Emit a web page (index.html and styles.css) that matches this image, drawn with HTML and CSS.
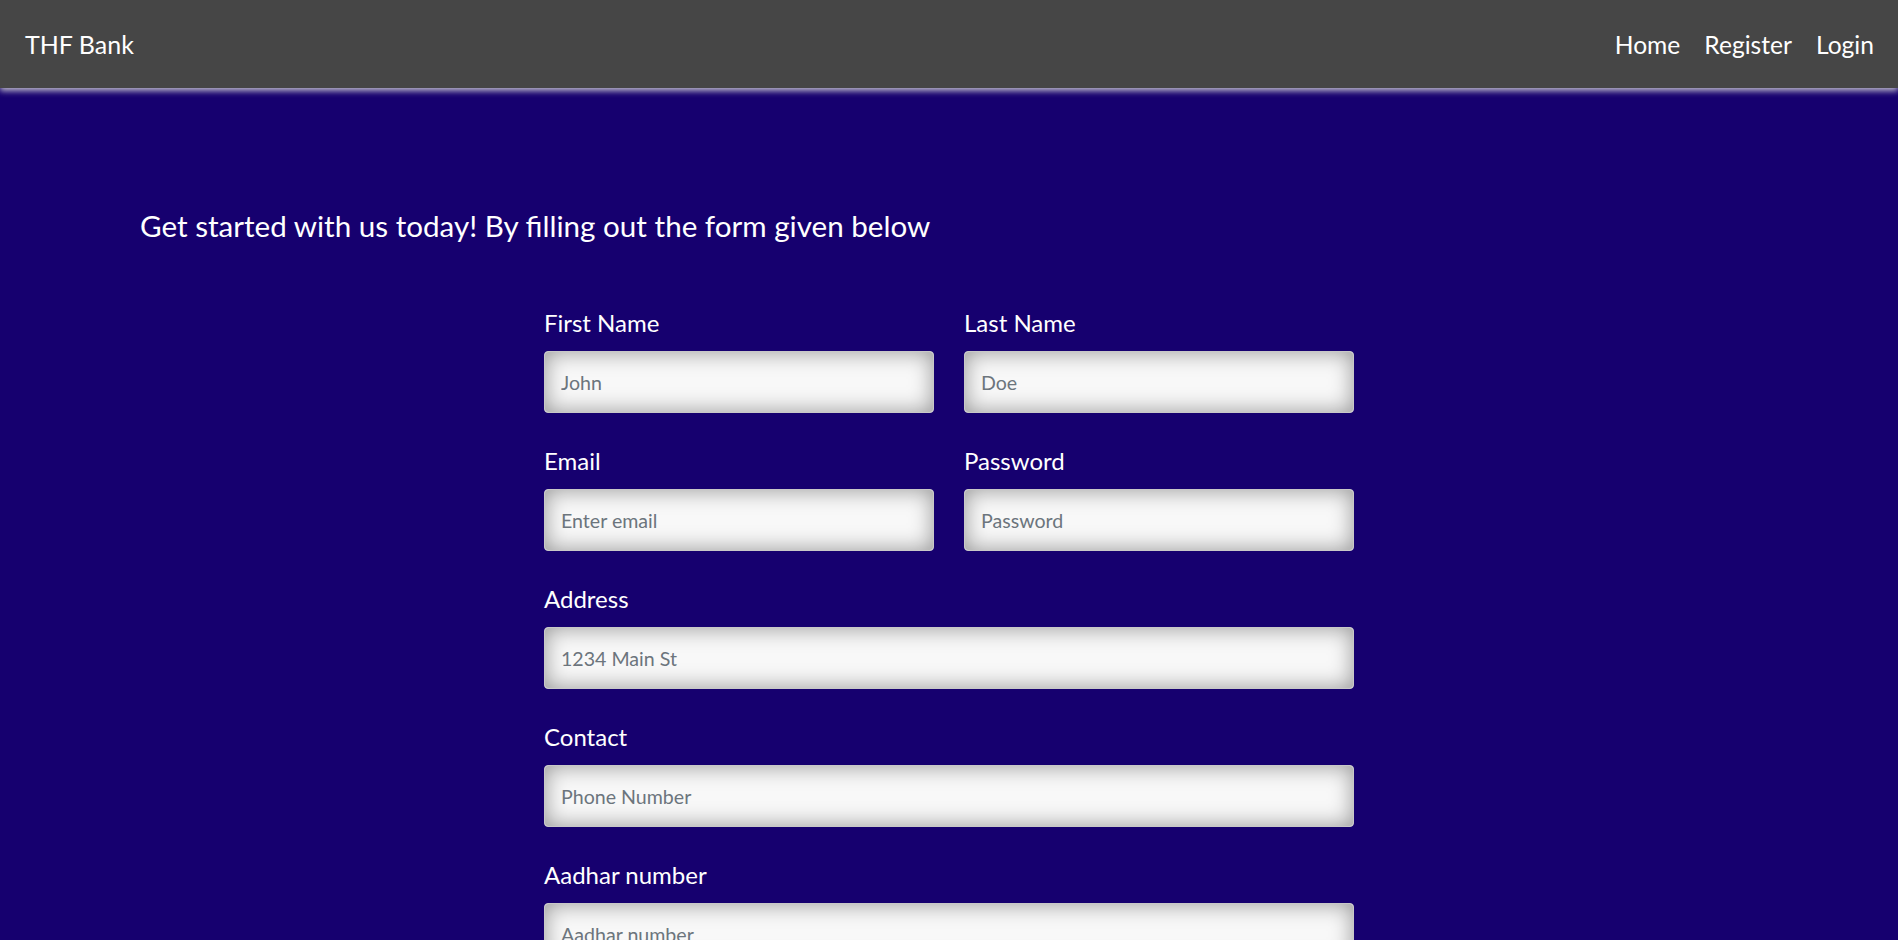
FILE: index.html
```html
<!DOCTYPE html>
<html lang="en">
<head>
<meta charset="utf-8">
<title>THF Bank - Register</title>
<link rel="stylesheet" href="styles.css">
</head>
<body>
<nav class="navbar">
  <a class="brand" href="#">THF Bank</a>
  <div class="nav-links">
    <a href="#">Home</a>
    <a href="#">Register</a>
    <a href="#">Login</a>
  </div>
</nav>
<main class="page">
  <h3 class="intro">Get started with us today! By filling out the form given below</h3>
  <form class="reg-form">
    <div class="row">
      <div class="field">
        <label>First Name</label>
        <input type="text" placeholder="John">
      </div>
      <div class="field">
        <label>Last Name</label>
        <input type="text" placeholder="Doe">
      </div>
    </div>
    <div class="row">
      <div class="field">
        <label>Email</label>
        <input type="email" placeholder="Enter email">
      </div>
      <div class="field">
        <label>Password</label>
        <input type="password" placeholder="Password">
      </div>
    </div>
    <div class="field">
      <label>Address</label>
      <input type="text" placeholder="1234 Main St">
    </div>
    <div class="field">
      <label>Contact</label>
      <input type="text" placeholder="Phone Number">
    </div>
    <div class="field">
      <label>Aadhar number</label>
      <input type="text" placeholder="Aadhar number">
    </div>
  </form>
</main>
</body>
</html>
```
FILE: styles.css
```css
* { box-sizing: border-box; }
html, body {
  margin: 0;
  padding: 0;
  background: #16006f;
  font-family: Lato, "Open Sans", sans-serif;
  color: #fff;
}
.navbar {
  height: 88px;
  background: #464646;
  display: flex;
  align-items: center;
  justify-content: space-between;
  padding: 0 24px 0 25px;
  box-shadow: 0 3px 6px rgba(215, 215, 215, 0.85);
  position: relative;
  z-index: 1;
}
.brand {
  color: #fff;
  text-decoration: none;
  font-size: 25px;
}
.nav-links {
  display: flex;
  gap: 24px;
}
.nav-links a {
  color: #fff;
  text-decoration: none;
  font-size: 24.6px;
}
.page {
  padding: 120px 0 40px;
}
.intro {
  margin: 0 0 0 140px;
  font-weight: 400;
  font-size: 29.6px;
  line-height: 36px;
}
.reg-form {
  width: 810px;
  margin: 64px auto 0;
  display: flex;
  flex-direction: column;
}
.row {
  display: flex;
  gap: 30px;
}
.row .field { flex: 1; }
.field {
  display: flex;
  flex-direction: column;
  margin-bottom: 33px;
}
.field label {
  font-size: 24px;
  line-height: 29px;
  margin-bottom: 14px;
}
.field input {
  height: 62px;
  border: 1px solid #c8c8c8;
  border-radius: 4px;
  background: #f8f8f8;
  box-shadow: inset 0 0 22px rgba(0, 0, 0, 0.4);
  padding: 0 16px;
  font-family: Lato, "Open Sans", sans-serif;
  font-size: 19.6px;
  color: #333;
}
.field input::placeholder {
  color: #6c757d;
}
```
